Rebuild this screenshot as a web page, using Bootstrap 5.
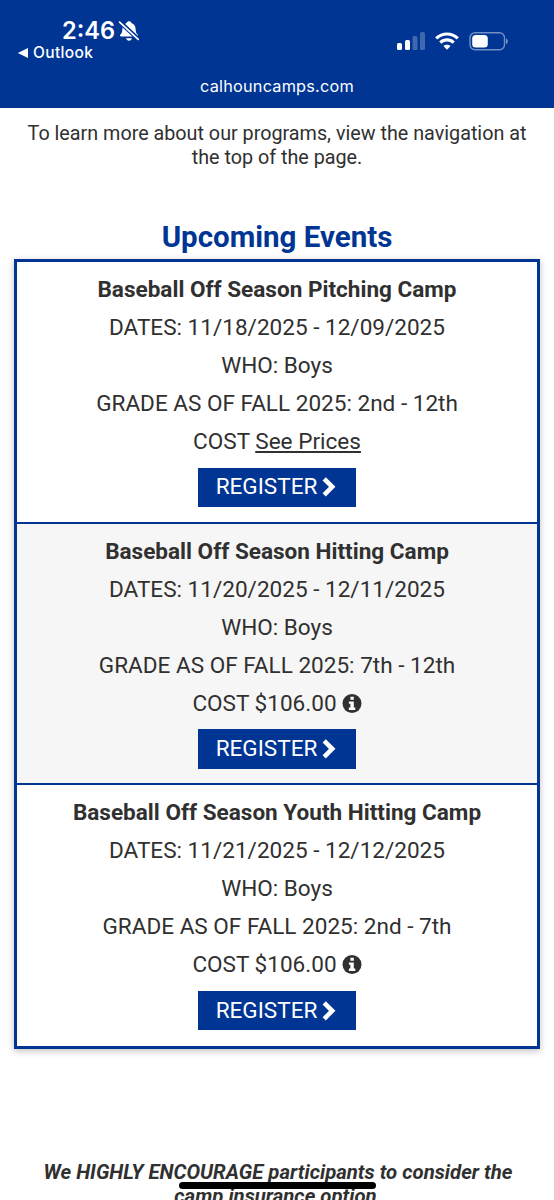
<!DOCTYPE html>
<html lang="en">
<head>
<meta charset="utf-8">
<meta name="viewport" content="width=device-width, initial-scale=1">
<title>Calhoun Camps</title>
<link href="https://cdn.jsdelivr.net/npm/bootstrap@5.3.0/dist/css/bootstrap.min.css" rel="stylesheet">
<style>
  body { font-family: Roboto, sans-serif; color: #303030; background: #fff; height: 1200px; overflow: hidden; }
  .phone { height: 1200px; }
  .topbar { height: 107.5px; background: #003594; font-family: Inter, sans-serif; }
  .clock { font-size: 23.6px; font-weight: 600; line-height: 24px; margin: 19px 0 0 62px; }
  .bell { margin-left: 3px; }
  .back { font-size: 15.5px; font-weight: 500; line-height: 20px; margin: 0 0 0 17px; letter-spacing: .35px; }
  .host { font-size: 16.3px; line-height: 20px; letter-spacing: .2px; margin-top: 13px; }
  .status { margin: 32px 45px 0 0; height: 19px; }
  .intro { font-size: 19.75px; line-height: 24.3px; margin-top: 14px; }
  .heading { font-size: 29.5px; line-height: 34px; color: #003594; margin-top: 50px; }
  .events { margin: 5px 14px 0 14px; border: 3px solid #003594; box-shadow: 0 2px 7px rgba(0,0,0,.25); }
  .event { height: 261.6px; padding-top: 9px; font-size: 22.55px; line-height: 38px; border-bottom: 2px solid #003594; }
  .event:last-child { border-bottom: 0; height: 260.3px; }
  .event:nth-child(even) { background: #f6f6f6; }
  .event a { color: inherit; text-underline-offset: 2px; text-decoration-thickness: 1.5px; }
  .event .register { width: 158px; height: 39.5px; margin-top: 6.5px; background: #003594; color: #fff; border-radius: 0; font-size: 22.55px; line-height: 38px; }
  .chevron { margin-left: 5px; margin-right: 2px; }
  .notice { font-size: 20.35px; line-height: 24.3px; margin-top: 111.5px; padding-left: 2px; }
  .home { left: 179px; top: 1182px; width: 197px; height: 6.5px; background: #000; border-radius: 4px; }
</style>
</head>
<body>
<div class="phone position-relative overflow-hidden">
  <header class="topbar text-white">
    <div class="d-flex justify-content-between">
      <div>
        <div class="clock d-flex align-items-center">2:46
          <svg class="bell" width="22" height="22" viewBox="0 0 22 22"><path d="M11 1.200c1.300 0 2.100.6 2.400 1.700 2.900.9 4.100 3.300 4.200 6 .1 3.200.7 4.300 2 5.700.8.9.5 2-.8 2H3.200c-1.300 0-1.600-1.100-.8-2 1.300-1.400 1.900-2.500 2-5.700.1-2.700 1.300-5.100 4.200-6C8.900 1.800 9.700 1.200 11 1.200z" fill="#fff"/><path d="M8 18.300h6c-.5 1.600-1.500 2.500-3 2.500s-2.500-.9-3-2.500z" fill="#fff"/><path d="M1.700 1.900l18.600 17.200" stroke="#003594" stroke-width="4.200"/><path d="M1.600 2.200l18.600 17.200" stroke="#fff" stroke-width="1.700" stroke-linecap="round"/></svg>
        </div>
        <div class="back d-flex align-items-center"><svg class="me-1" width="12" height="10" viewBox="0 0 12 10"><path d="M.8 5L11 0v10z" fill="#fff"/></svg>Outlook</div>
      </div>
      <svg class="status" width="112" height="19" viewBox="0 0 112 19" fill="#fff">
        <rect x="0" y="11" width="5" height="7" rx="1.500"/><rect x="8" y="8" width="5" height="10" rx="1.500"/>
        <g opacity=".25"><rect x="15.500" y="4" width="5" height="14" rx="1.500"/><rect x="23" y="0" width="5" height="18" rx="1.500"/></g>
        <g fill="none" stroke="#fff" stroke-width="3.200"><path d="M39.200 6.400c6.200-5.900 15.400-5.900 21.600 0"/><path d="M43.300 10.600c3.800-3.700 9.600-3.700 13.400 0"/></g>
        <path d="M50 17.800l-3.600-3.700c2-1.900 5.200-1.900 7.200 0z"/>
        <rect x="73" y=".8" width="34.500" height="17" rx="5" fill="none" stroke="#fff" stroke-opacity=".45" stroke-width="1.400"/>
        <rect x="75.200" y="3" width="15.600" height="12.600" rx="3.500"/><path d="M109 6.600c2.300.8 2.300 4.800 0 5.600z" opacity=".5"/>
      </svg>
    </div>
    <div class="host text-center">calhouncamps.com</div>
  </header>
  <main class="text-center">
    <p class="intro mb-0">To learn more about our programs, view the navigation at<br>the top of the page.</p>
    <h2 class="heading fw-bold mb-0">Upcoming Events</h2>
    <section class="events">
      <article class="event">
        <div class="fw-bold">Baseball Off Season Pitching Camp</div>
        <div>DATES: 11/18/2025 - 12/09/2025</div>
        <div>WHO: Boys</div>
        <div>GRADE AS OF FALL 2025: 2nd - 12th</div>
        <div>COST <a href="#">See Prices</a></div>
        <button class="btn register border-0 p-0 d-inline-flex align-items-center justify-content-center">REGISTER<svg class="chevron" width="14" height="22" viewBox="0 0 14 22"><path d="M2.200 2.800l8 8-8 8" fill="none" stroke="#fff" stroke-width="4.600"/></svg></button>
      </article>
      <article class="event">
        <div class="fw-bold">Baseball Off Season Hitting Camp</div>
        <div>DATES: 11/20/2025 - 12/11/2025</div>
        <div>WHO: Boys</div>
        <div>GRADE AS OF FALL 2025: 7th - 12th</div>
        <div class="d-flex justify-content-center align-items-center">COST $106.00<svg class="ms-1" width="21" height="20" viewBox="0 0 21 20"><circle cx="11" cy="9.500" r="9.500" fill="#303030"/><path d="M9.400 2.700h3.400v3H9.400zM7.900 7.500h4.900v6h1.500v2.400H7.900v-2.400h1.500V9.800H7.900z" fill="#fff"/></svg></div>
        <button class="btn register border-0 p-0 d-inline-flex align-items-center justify-content-center">REGISTER<svg class="chevron" width="14" height="22" viewBox="0 0 14 22"><path d="M2.200 2.800l8 8-8 8" fill="none" stroke="#fff" stroke-width="4.600"/></svg></button>
      </article>
      <article class="event">
        <div class="fw-bold">Baseball Off Season Youth Hitting Camp</div>
        <div>DATES: 11/21/2025 - 12/12/2025</div>
        <div>WHO: Boys</div>
        <div>GRADE AS OF FALL 2025: 2nd - 7th</div>
        <div class="d-flex justify-content-center align-items-center">COST $106.00<svg class="ms-1" width="21" height="20" viewBox="0 0 21 20"><circle cx="11" cy="9.500" r="9.500" fill="#303030"/><path d="M9.400 2.700h3.400v3H9.400zM7.900 7.500h4.900v6h1.500v2.400H7.900v-2.400h1.500V9.800H7.900z" fill="#fff"/></svg></div>
        <button class="btn register border-0 p-0 d-inline-flex align-items-center justify-content-center">REGISTER<svg class="chevron" width="14" height="22" viewBox="0 0 14 22"><path d="M2.200 2.800l8 8-8 8" fill="none" stroke="#fff" stroke-width="4.600"/></svg></button>
      </article>
    </section>
    <p class="notice fw-bold fst-italic mb-0">We HIGHLY ENCOURAGE participants to consider the<br>camp insurance option&nbsp;</p>
  </main>
  <div class="home position-absolute"></div>
</div>
<script src="https://cdn.jsdelivr.net/npm/bootstrap@5.3.0/dist/js/bootstrap.bundle.min.js"></script>
</body>
</html>
